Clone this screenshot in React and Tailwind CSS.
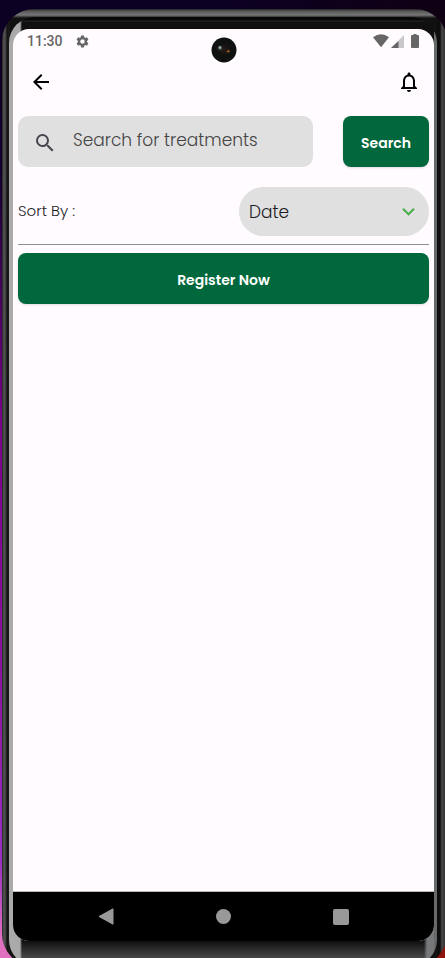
import { MdArrowBack, MdNotificationsNone, MdSearch, MdSettings, MdKeyboardArrowDown } from "react-icons/md";

function StatusBar() {
  return (
    <div className="relative flex h-6 shrink-0 items-center justify-between pr-[15px] pl-3.5 text-[#666]">
      <div className="flex items-center gap-3">
        <span className="font-['Roboto',sans-serif] text-sm leading-6 font-medium">11:30</span>
        <MdSettings className="size-[15px]" aria-hidden="true" />
      </div>
      <div className="flex items-center">
        <svg className="h-[14px] w-4" viewBox="0 0 16 14" aria-hidden="true">
          <path d="M0 3.2Q8-2.6 16 3.2L8 13.2Z" fill="currentColor" />
        </svg>
        <svg className="ml-0.5 h-[14px] w-[13px]" viewBox="0 0 13 14" aria-hidden="true">
          <path d="M13 1V14H0Z" fill="#c9c7ca" />
          <path d="M7.5 7V14H0Z" fill="currentColor" />
        </svg>
        <svg className="ml-[7px] h-[14px] w-2" viewBox="0 0 8 14" aria-hidden="true">
          <path d="M2.5 0H5.5V1H7.2Q8 1 8 2V13Q8 14 7 14H1Q0 14 0 13V2Q0 1 .8 1H2.5Z" fill="currentColor" />
        </svg>
      </div>
      <svg className="absolute top-2 left-1/2 size-[26px] -translate-x-1/2" viewBox="0 0 26 26" aria-hidden="true">
        <defs>
          <radialGradient id="lens">
            <stop offset="0" stopColor="#2a1a16" />
            <stop offset="0.5" stopColor="#1a1412" />
            <stop offset="1" stopColor="#0e110f" />
          </radialGradient>
        </defs>
        <circle cx="13" cy="13" r="12.5" fill="#0e110f" />
        <circle cx="13" cy="13" r="7" fill="url(#lens)" />
        <circle cx="9" cy="11" r="2.6" fill="#303a38" />
        <circle cx="9" cy="10.6" r="1.3" fill="#a5b5b0" />
        <circle cx="17.3" cy="14.2" r="1.8" fill="#4a2c10" />
        <circle cx="17.3" cy="14.4" r=".7" fill="#e0a040" />
      </svg>
    </div>
  );
}

function NavigationBar() {
  return (
    <nav className="grid h-[50px] shrink-0 grid-cols-[1fr_48px_1fr] items-center border-t border-[#b9bab6] bg-black px-7 text-[#999]">
      <button type="button" aria-label="Back" className="justify-self-center pr-7">
        <svg className="h-[17px] w-4" viewBox="0 0 16 17" aria-hidden="true">
          <path d="M15 .8V16.2L1 8.5Z" fill="currentColor" stroke="currentColor" strokeLinejoin="round" />
        </svg>
      </button>
      <button type="button" aria-label="Home" className="size-[15px] justify-self-center rounded-full bg-[#999]" />
      <button type="button" aria-label="Recent apps" className="justify-self-center pl-7">
        <span className="block size-4 rounded-xs bg-[#999]" />
      </button>
    </nav>
  );
}

export default function App() {
  return (
    <div className="flex min-h-screen flex-col overflow-hidden bg-[linear-gradient(to_bottom,#0b0022_0%,#12002c_18%,#3a0052_28%,#780088_44%,#8a12a0_70%,#9a30c0_90%,#e070c0_98%)]">
      <div className="flex flex-1 flex-col bg-[linear-gradient(to_right,transparent_50%,#100014_98%),linear-gradient(to_bottom,transparent_95%,#8c1408_98%)] bg-[length:100%_10%,50%_100%] bg-[position:top,right] bg-no-repeat pt-[9px] pl-0.5">
        <div className="-mr-0.5 -mb-2 flex flex-1 flex-col rounded-[32px] bg-[linear-gradient(to_right,#242424_0px,#555_2px,#3a3a3a_4px,#111_5px,#1c1c1c_7px,transparent_8px,transparent_calc(100%-10px),#0c0c0c_calc(100%-9px),#101010_calc(100%-7px),#484848_calc(100%-5px),#333_calc(100%-2px)),linear-gradient(to_bottom,#222_0px,#555_2px,#777_6px,#333_8px,#111_9px)] px-[7px] pt-2 pr-2.5">
          <div className="flex flex-1 flex-col rounded-[26px] bg-[linear-gradient(to_right,#aaa_11px,transparent_13px,transparent_calc(100%-3px),#68696b_calc(100%-3px)),linear-gradient(to_right,transparent_calc(100%-13px),#77787a_calc(100%-10px)),linear-gradient(to_bottom,#080808_0px,#080808_3px,#292929_4px,#101010_5px,#101010_calc(100%-25px),#484848_calc(100%-8px))] bg-[length:100%_100%,100%_50px,100%_100%] bg-[position:top,bottom,top] bg-no-repeat pt-3 pr-[3px] pb-[25px] pl-1">
            <main className="flex flex-1 flex-col overflow-hidden rounded-2xl bg-[#fffbff] font-['Poppins','Inter',sans-serif] text-[#1c1b1f]">
              <StatusBar />
              <header className="flex h-[58px] shrink-0 items-center justify-between pr-[11px] pl-3">
                <button type="button" aria-label="Go back" className="flex size-8 items-center justify-center text-black">
                  <MdArrowBack className="size-6" />
                </button>
                <button type="button" aria-label="Notifications" className="flex size-7 items-center justify-center text-black">
                  <MdNotificationsNone className="size-6" />
                </button>
              </header>
              <div className="flex flex-1 flex-col px-[5px] pt-[5px]">
                <form className="flex gap-[30px]" onSubmit={(event) => event.preventDefault()}>
                  <label className="flex h-[51px] min-w-0 flex-1 items-center rounded-[10px] bg-[#e0e0e0] pl-[15px]">
                    <MdSearch className="mt-0.5 size-6 shrink-0 text-[#47464e]" aria-hidden="true" />
                    <input
                      type="text"
                      aria-label="Search for treatments"
                      placeholder="Search for treatments"
                      className="h-full min-w-0 flex-1 bg-transparent pb-1 pl-4 text-[17px] font-light outline-none placeholder:text-[#444]"
                    />
                  </label>
                  <button type="submit" className="h-[51px] w-[86px] shrink-0 rounded-lg bg-[#00683c] pt-0.5 text-sm font-semibold text-white shadow-sm">
                    Search
                  </button>
                </form>
                <div className="mt-5 flex items-center justify-between">
                  <label htmlFor="sort" className="text-[15px] font-light">
                    Sort By :
                  </label>
                  <div className="grid w-[190px] items-center">
                    <select
                      id="sort"
                      defaultValue="Date"
                      className="col-start-1 row-start-1 h-[49px] w-full appearance-none rounded-full bg-[#e0e0e0] pt-0.5 pl-2.5 text-[17px] font-light outline-none"
                    >
                      <option>Date</option>
                    </select>
                    <MdKeyboardArrowDown className="pointer-events-none col-start-1 row-start-1 mr-2 size-[25px] justify-self-end text-[#4caf50]" aria-hidden="true" />
                  </div>
                </div>
                <hr className="mt-2 border-[#909090]" />
                <button type="button" className="mt-2 h-[51px] w-full rounded-lg bg-[#00683c] pt-0.5 text-sm font-semibold text-white shadow-sm">
                  Register Now
                </button>
              </div>
              <NavigationBar />
            </main>
          </div>
        </div>
      </div>
    </div>
  );
}
